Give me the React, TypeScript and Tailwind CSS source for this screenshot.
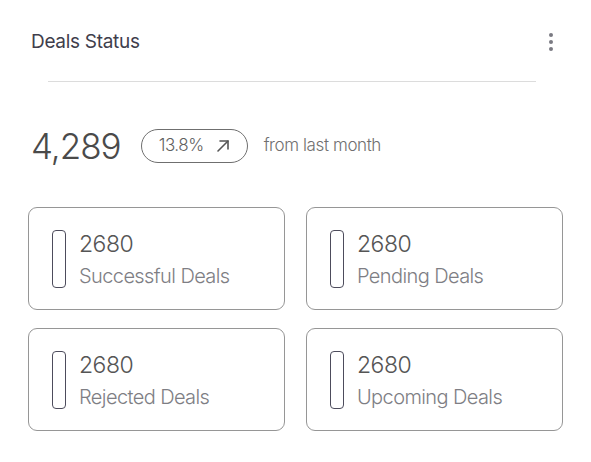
import React from 'react';

const deals = [
  { count: '2680', label: 'Successful Deals' },
  { count: '2680', label: 'Pending Deals' },
  { count: '2680', label: 'Rejected Deals' },
  { count: '2680', label: 'Upcoming Deals' },
];

const DealCard = ({ count, label }: { count: string; label: string }) => (
  <div className="flex h-[103px] items-start gap-[13px] rounded-[9px] border border-[#969696] pl-[23px] pt-[22px]">
    <div className="h-[58px] w-[14px] rounded-[4px] border-[1.5px] border-[#4d4c5c]" />
    <div className="flex flex-col">
      <span className="text-[23px] font-light leading-[28px] tracking-[-0.5px] text-[#555]">{count}</span>
      <span className="mt-[5px] text-[20px] font-light leading-[26px] tracking-[-0.6px] text-[#7e7e84]">{label}</span>
    </div>
  </div>
);

export default function App() {
  return (
    <div className="h-[462px] w-[591px] bg-white font-['Inter',sans-serif]">
      <div className="flex items-center justify-between pl-[31px] pr-[38px] pt-[30px]">
        <h3 className="text-[19px] leading-[24px] tracking-[-0.3px] text-[#3f3e4c]">Deals Status</h3>
        <div className="flex flex-col gap-[3px]">
          <span className="h-[4px] w-[4px] rounded-full bg-[#7a7a82]" />
          <span className="h-[4px] w-[4px] rounded-full bg-[#7a7a82]" />
          <span className="h-[4px] w-[4px] rounded-full bg-[#7a7a82]" />
        </div>
      </div>
      <div className="ml-[48px] mr-[55px] mt-[27px] h-px bg-[#dcdcdc]" />
      <div className="mt-[42px] flex items-center pl-[31px]">
        <span className="text-[35px] font-light leading-[44px] tracking-[-1px] text-[#4a4a4a]">4,289</span>
        <div className="ml-[20px] flex h-[34px] w-[107px] items-center justify-center gap-[12px] rounded-full border border-[#6f6f6f]">
          <span className="text-[17px] font-light tracking-[-0.5px] text-[#5f5f5f]">13.8%</span>
          <svg width="14" height="14" viewBox="0 0 14 14" fill="none" stroke="#555" strokeWidth="1.6" strokeLinecap="round" strokeLinejoin="round">
            <path d="M2 12 L12 2" />
            <path d="M4 2 H12 V10" />
          </svg>
        </div>
        <span className="ml-[16px] text-[17px] font-light tracking-[-0.4px] text-[#707070]">from last month</span>
      </div>
      <div className="mx-[28px] mt-[39px] grid grid-cols-2 gap-x-[21px] gap-y-[18px]">
        {deals.map(d => (
          <DealCard key={d.label} count={d.count} label={d.label} />
        ))}
      </div>
    </div>
  );
}
